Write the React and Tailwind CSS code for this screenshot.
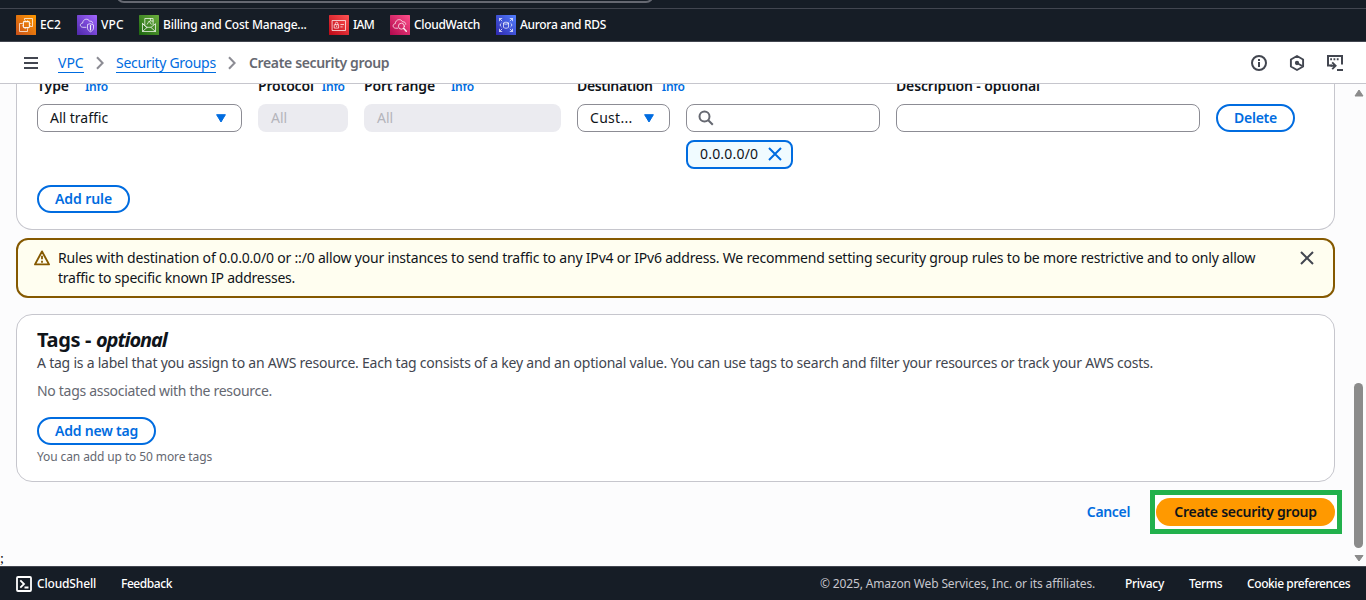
const Caret = () => (
  <svg className="shrink-0" width="10" height="9" viewBox="0 0 10 9"><path d="M0.6 0.7h8.8L5 8z" fill="#006ce0" stroke="#006ce0" strokeLinejoin="round" /></svg>
);

const Close = ({ color }) => (
  <svg className="shrink-0" width="14" height="14" viewBox="0 0 14 14" fill="none" stroke={color} strokeWidth="2"><path d="M1 1l12 12M13 1L1 13" /></svg>
);

const Chevron = () => (
  <svg className="shrink-0" width="8" height="14" viewBox="0 0 8 14" fill="none" stroke="#8c8c94" strokeWidth="2"><path d="M1 1.2l5.6 5.8L1 12.8" /></svg>
);

const Tile = ({ id, from, to, children }) => (
  <svg className="shrink-0" width="20" height="20" viewBox="0 0 20 20" fill="none" stroke="#fff" strokeOpacity="0.9" strokeWidth="0.8" strokeLinejoin="round" strokeLinecap="round">
    <defs>
      <linearGradient id={id} x1="0" y1="1" x2="1" y2="0">
        <stop stopColor={from} />
        <stop offset="1" stopColor={to} />
      </linearGradient>
    </defs>
    <rect width="20" height="20" rx="0.6" fill={`url(#${id})`} stroke="none" />
    {children}
  </svg>
);

const favorites = [
  {
    label: "EC2", width: "w-[21px]", spacing: "tracking-[-0.2px]", gap: "mr-4",
    icon: (
      <Tile id="ec2" from="#c8511b" to="#ff9900">
        <rect x="7.4" y="6.6" width="6" height="6" rx="0.8" strokeWidth="1.1" />
        <path d="M9.2 5.4V6.6M11.6 5.4V6.6M14.5 8.4h-1.1M14.5 10.8h-1.1M9.2 12.6v1.1M11.6 12.6v1.1M6.3 8.4h1.1M6.3 10.8h1.1" strokeWidth="0.6" />
        <path d="M8.5 4.8V3.5h8v8h-2M5.6 8.5H3.5v8h8v-2" />
      </Tile>
    ),
  },
  {
    label: "VPC", width: "w-[23px]", spacing: "tracking-[0.1px]", gap: "mr-[15px]",
    icon: (
      <Tile id="vpc" from="#4d27a8" to="#a166ff">
        <path d="M9 12.3H5.8C2.4 11.9 2.8 8.1 5.6 8.1C6 3.6 11.2 3 12.6 6.3C14.6 5.8 15.6 6.6 15.7 8" />
        <path d="M13.5 8.8l3 1.1v3.2c0 1.8-1.6 2.9-3 3.7c-1.4-.8-3-1.9-3-3.7V9.9z" />
        <path d="M13.5 10.4v4.6" strokeWidth="1.2" />
      </Tile>
    ),
  },
  {
    label: "Billing and Cost Manage...", width: "w-[144px]", spacing: "tracking-[-0.2px]", gap: "mr-[22px]",
    icon: (
      <Tile id="billing" from="#1b660f" to="#6cae3e">
        <path d="M5.8 9.5V3.5h8.3v6M11.4 3.6v2.4h2.6" />
        <path d="M3.5 8.7v7.8h13V8.7L12 12.3H8zM3.5 8.7L8 12.3M3.7 16.3L8 12.5M16.3 16.3L12 12.5" />
        <path d="M8.2 9.2l2-3.2l2 3.2" strokeWidth="0.8" />
      </Tile>
    ),
  },
  {
    label: "IAM", width: "w-[21px]", spacing: "tracking-[-0.7px]", gap: "mr-4",
    icon: (
      <Tile id="iam" from="#bd0816" to="#ff5252">
        <path d="M3.5 5.5h13v10h-13z" />
        <path d="M5.6 9.7h4v3.4h-4zM6.4 9.5V8.3c0-1.4 2.4-1.4 2.4 0v1.2M7.6 11v.6M11.8 9.5h2.8M11.8 11.9h1.4" />
      </Tile>
    ),
  },
  {
    label: "CloudWatch", width: "w-[66px]", spacing: "tracking-[-0.31px]", gap: "mr-4",
    icon: (
      <Tile id="cloudwatch" from="#b0084d" to="#ff4f8b">
        <path d="M7.6 13.2H5.4C2.2 12.7 2.6 8.9 5.3 8.7C5.4 4.2 11 3.2 12.6 6.9C14.6 6.4 15.8 7.7 15.8 9.3" />
        <circle cx="11.4" cy="11.2" r="3" />
        <path d="M13.8 13.6l2.5 2.6" strokeWidth="1.5" />
      </Tile>
    ),
  },
  {
    label: "Aurora and RDS", width: "w-[90px]", spacing: "tracking-[-0.3px]", gap: "",
    icon: (
      <Tile id="rds" from="#2e27ad" to="#527fff">
        <path d="M3.5 5.8V3.5h2.3M3.7 3.7l2.2 2.2M14.2 3.5h2.3v2.3M16.3 3.7l-2.2 2.2M3.5 14.2v2.3h2.3M3.7 16.3l2.2-2.2M14.2 16.5h2.3v-2.3M16.3 16.3l-2.2-2.2" />
        <ellipse cx="10" cy="8.2" rx="2.5" ry="1" />
        <path d="M7.5 8.2v4c0 1.4 5 1.4 5 0v-4M5.2 8.2c-1.5 1-1.5 2.6 0 3.6M14.8 8.2c1.5 1 1.5 2.6 0 3.6" />
      </Tile>
    ),
  },
];

const Outline = ({ className, children }) => (
  <button className={`flex h-7 items-center justify-center whitespace-nowrap rounded-full border-2 border-[#006ce0] bg-white font-semibold text-[#006ce0] ${className}`}>{children}</button>
);

const Label = ({ text, className, gap = "" }) => (
  <div className={`flex whitespace-nowrap ${className}`}>
    <span className="font-semibold">{text}</span>
    {gap && <span className={`text-xs leading-[22px] font-semibold tracking-[-0.25px] text-[#006ce0] ${gap}`}>Info</span>}
  </div>
);

const field = "flex h-7 items-center rounded-lg border border-[#8c8c94] bg-white";
const disabled = "flex h-7 items-center rounded-lg bg-[#ebebf0] text-[#b4b4bb]";

function TopNav() {
  return (
    <header className="h-[42px] shrink-0 overflow-hidden border-b border-[#424650] bg-[#161d26]">
      <div className="flex h-[9px] items-start border-b border-[#424650] pl-[116px]">
        <div className="-mt-5 h-[23px] w-[538px] rounded-lg border-2 border-[#656871] bg-[#161d26]" />
      </div>
      <nav className="flex h-8 items-center pl-4 text-xs font-medium text-white">
        {favorites.map((f) => (
          <a key={f.label} className={`flex items-center gap-1 whitespace-nowrap ${f.gap}`}>
            {f.icon}
            <span className={`${f.width} ${f.spacing}`}>{f.label}</span>
          </a>
        ))}
      </nav>
    </header>
  );
}

function Breadcrumbs() {
  return (
    <div className="flex h-[42px] shrink-0 items-center border-b border-[#c6c6cd] bg-white pr-[23px] pl-6">
      <svg className="mr-5 shrink-0" width="14" height="12" viewBox="0 0 14 12" stroke="#424650" strokeWidth="2"><path d="M0 1h14M0 6h14M0 11h14" /></svg>
      <a className="mt-px mr-3 h-5 w-[26px] border-b border-[#006ce0] leading-[19px] text-[#006ce0]">VPC</a>
      <Chevron />
      <a className="mt-px mr-3 ml-3 h-5 w-[100px] whitespace-nowrap border-b border-[#006ce0] leading-[19px] tracking-[-0.3px] text-[#006ce0]">Security Groups</a>
      <Chevron />
      <span className="ml-[13px] whitespace-nowrap font-semibold tracking-[-0.35px] text-[#656871]">Create security group</span>
      <div className="ml-auto flex items-center gap-[22px]">
        <svg width="16" height="16" viewBox="0 0 16 16" fill="none" stroke="#424650" strokeWidth="2"><circle cx="8" cy="8" r="7" /><path d="M8 7v5M8 4v2" /></svg>
        <svg width="16" height="16" viewBox="0 0 16 16" fill="none" stroke="#424650" strokeWidth="1.9" strokeLinejoin="round"><path d="M8 1l6.1 3.5v7L8 15l-6.1-3.5v-7z" /><path d="M8 8l5.6 3.2" /><circle cx="8" cy="8" r="1.2" fill="#424650" /></svg>
        <svg width="16" height="16" viewBox="0 0 16 16" fill="none" stroke="#424650" strokeWidth="2"><path d="M5 10.5H1V1h14v8.5M10 15h6" /><path d="M3.5 10.8h5M5.2 7.4l3.4 3.4l-3.4 3.4" strokeWidth="1.9" /><path d="M3.2 4.2h1.8M6.5 4.2h1.8M9.8 4.2h1.8" /></svg>
      </div>
    </div>
  );
}

function RulesPanel() {
  return (
    <section className="h-[146px] w-[1319px] shrink-0 rounded-b-2xl border border-t-0 border-[#c6c6cd] bg-white pr-5 pl-5">
      <div className="-mt-2 flex h-7 items-start leading-5">
        <Label text="Type" className="w-[221px] tracking-[-0.1px]" gap="ml-4" />
        <Label text="Protocol" className="w-[106px] tracking-[-0.15px]" gap="ml-2" />
        <Label text="Port range" className="w-[213px] tracking-[-0.16px]" gap="ml-4" />
        <Label text="Destination" className="w-[319px] tracking-[-0.33px]" gap="ml-[9px]" />
        <Label text="Description - optional" className="tracking-[-0.14px]" />
      </div>
      <div className="flex items-start gap-4">
        <div className={`${field} w-[205px] justify-between pr-[15px] pl-3`}>All traffic<Caret /></div>
        <div className={`${disabled} w-[90px] pl-[13px]`}>All</div>
        <div className={`${disabled} w-[197px] pl-[13px]`}>All</div>
        <div className={`${field} w-[93px] justify-between pr-[15px] pl-3`}><span className="tracking-[0.3px]">Cust...</span><Caret /></div>
        <div className="flex w-[194px] flex-col items-start gap-2">
          <div className={`${field} w-full pl-[11px]`}>
            <svg width="16" height="16" viewBox="0 0 16 16" fill="none" stroke="#656871" strokeWidth="2"><circle cx="6.5" cy="6.5" r="5" /><path d="M10 10l4.8 4.8" /></svg>
          </div>
          <div className="flex h-[29px] w-[107px] items-center justify-between rounded-lg border-2 border-[#006ce0] bg-[#f0fbff] pr-[9px] pb-px pl-3"><span className="leading-5 tracking-[0.2px]">0.0.0.0/0</span><Close color="#006ce0" /></div>
        </div>
        <div className={`${field} w-[304px]`} />
        <Outline className="w-[79px] tracking-[-0.25px]">Delete</Outline>
      </div>
      <Outline className="mt-4 w-[93px] tracking-[-0.07px]">Add rule</Outline>
    </section>
  );
}

function Warning() {
  return (
    <div className="mt-2 flex h-[60px] w-[1319px] shrink-0 items-start rounded-xl border-2 border-[#855900] bg-[#fffef0] pt-2 pr-[19px] pl-4 leading-5">
      <svg className="mt-[1.5px] mr-2 shrink-0" width="16" height="16" viewBox="0 0 16 16" fill="none" stroke="#855900" strokeWidth="1.9" strokeLinejoin="round"><path d="M8 1.4L15 14.4H1z" /><path d="M8 5.8v3.4M8 10.8v2" strokeWidth="1.8" /></svg>
      <div className="whitespace-nowrap">
        <p className="tracking-[-0.19px]">Rules with destination of 0.0.0.0/0 or ::/0 allow your instances to send traffic to any IPv4 or IPv6 address. We recommend setting security group rules to be more restrictive and to only allow</p>
        <p className="tracking-[-0.235px]">traffic to specific known IP addresses.</p>
      </div>
      <span className="mt-[3px] ml-auto"><Close color="#424650" /></span>
    </div>
  );
}

function Tags() {
  return (
    <section className="mt-4 h-[168px] w-[1319px] shrink-0 whitespace-nowrap rounded-2xl border border-[#c6c6cd] bg-white px-5 pt-[13px]">
      <h2 className="flex text-xl leading-6 font-bold"><span className="w-[59px] tracking-[-0.35px]">Tags -</span><span className="tracking-[-1.1px] italic">optional</span></h2>
      <p className="mt-px leading-5 tracking-[-0.228px] text-[#424650]">A tag is a label that you assign to an AWS resource. Each tag consists of a key and an optional value. You can use tags to search and filter your resources or track your AWS costs.</p>
      <p className="mt-2 leading-5 tracking-[-0.3px] text-[#656871]">No tags associated with the resource.</p>
      <Outline className="mt-4 w-[119px] tracking-[-0.2px]">Add new tag</Outline>
      <p className="mt-1 text-xs leading-4 tracking-[-0.11px] text-[#656871]">You can add up to 50 more tags</p>
    </section>
  );
}

export default function App() {
  return (
    <div className="flex h-[600px] w-[1366px] flex-col overflow-hidden bg-[#fcfcfd] font-['Noto_Sans','Open_Sans',sans-serif] text-sm text-[#0f141a]">
      <TopNav />
      <Breadcrumbs />
      <div className="flex h-[482px] shrink-0">
        <main className="relative flex h-full flex-1 flex-col overflow-hidden pl-4">
          <RulesPanel />
          <Warning />
          <Tags />
          <div className="mt-2 flex h-11 items-center justify-end pr-[9px]">
            <button className="mr-5 font-semibold tracking-[-0.35px] text-[#006ce0]">Cancel</button>
            <div className="flex h-11 w-[192px] items-center border-[5px] border-[#22b14c] bg-white pl-px">
              <button className="h-7 w-[179px] whitespace-nowrap rounded-full bg-[#ff9900] font-semibold tracking-[-0.24px]">Create security group</button>
            </div>
          </div>
          <span className="absolute bottom-0 left-0 font-['Liberation_Serif',serif] text-sm leading-[14px] text-black">;</span>
        </main>
        <div className="flex w-[15px] shrink-0 flex-col items-center pt-[5px]">
          <svg width="10" height="8" viewBox="0 0 10 8"><path d="M5 1L9 7H1z" fill="#8b8b8b" stroke="#8b8b8b" strokeLinejoin="round" /></svg>
          <div className="mt-[286px] h-[165px] w-[9px] rounded-full bg-[#8b8b8b]" />
          <svg className="mt-1.5" width="10" height="8" viewBox="0 0 10 8"><path d="M5 7L9 1.5H1z" fill="#8b8b8b" stroke="#8b8b8b" strokeLinejoin="round" /></svg>
        </div>
      </div>
      <footer className="flex h-[34px] shrink-0 items-center whitespace-nowrap border-t border-[#424650] bg-[#161d26] pl-4 text-xs font-medium text-white">
        <svg className="mr-[5px]" width="16" height="16" viewBox="0 0 16 16" fill="none" stroke="#fff" strokeWidth="1.8"><rect x="1" y="1" width="14" height="14" rx="1" /><path d="M4.3 4.3L8 8l-3.7 3.7M8.5 11.5h4" /></svg>
        <span className="w-[84px] tracking-[-0.16px]">CloudShell</span>
        <span className="tracking-[-0.43px]">Feedback</span>
        <span className="ml-auto w-[305px] font-normal tracking-[-0.144px] text-[#c6c6cd]">© 2025, Amazon Web Services, Inc. or its affiliates.</span>
        <span className="w-16 tracking-[-0.3px]">Privacy</span>
        <span className="w-[58px] tracking-[-0.4px]">Terms</span>
        <span className="w-[119px] tracking-[-0.41px]">Cookie preferences</span>
      </footer>
    </div>
  );
}
